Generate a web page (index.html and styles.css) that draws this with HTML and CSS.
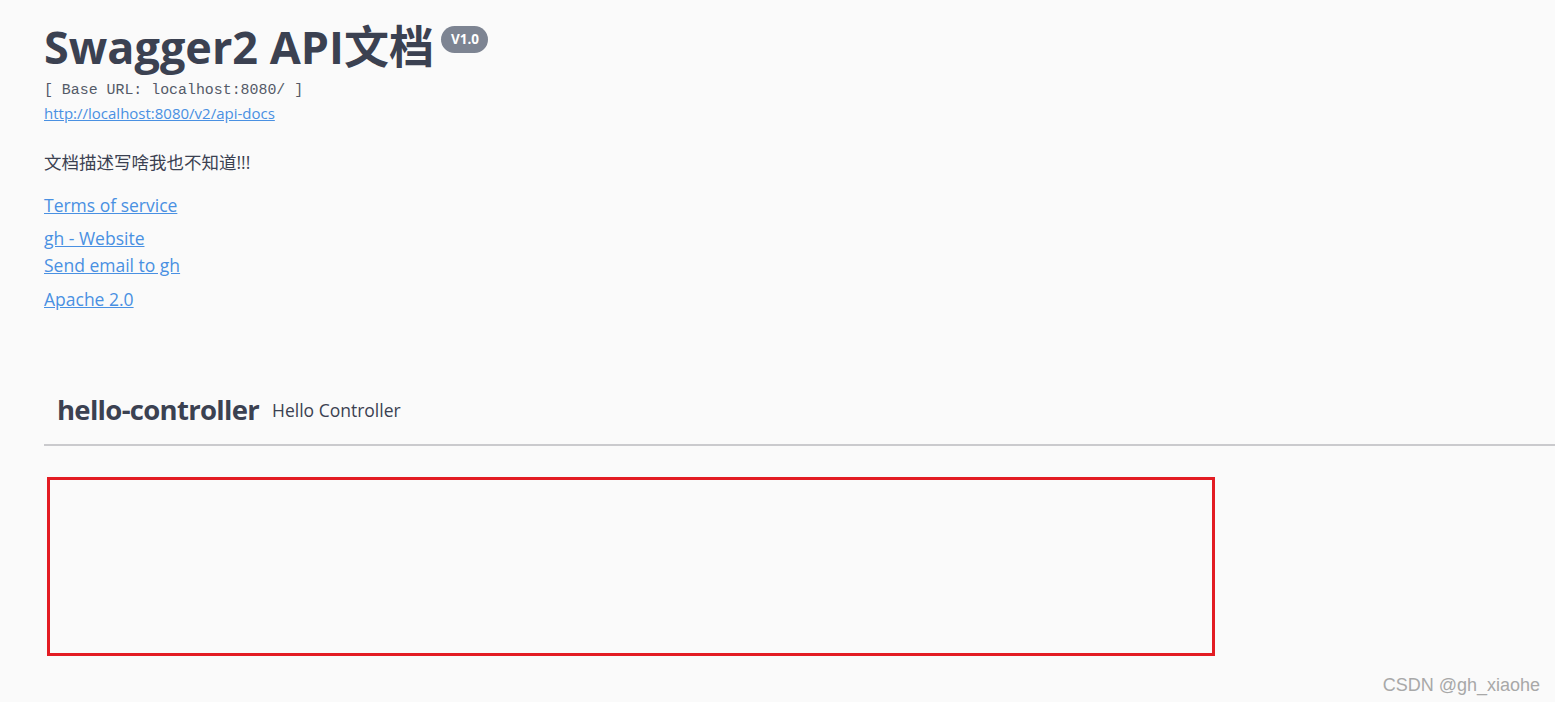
FILE: index.html
```html
<!DOCTYPE html>
<html lang="zh-CN">
<head>
<meta charset="utf-8">
<title>Swagger2 API文档</title>
<link rel="stylesheet" href="styles.css">
</head>
<body>
<div class="page">
  <section class="info">
    <h2 class="title">Swagger2 API文档<span class="version">V1.0</span></h2>
    <pre class="base-url">[ Base URL: localhost:8080/ ]</pre>
    <a class="url" href="#">http://localhost:8080/v2/api-docs</a>
    <p class="description">文档描述写啥我也不知道!!!</p>
    <div class="tos"><a href="#">Terms of service</a></div>
    <div class="contact">
      <a href="#">gh - Website</a>
      <a href="#">Send email to gh</a>
    </div>
    <div class="license"><a href="#">Apache 2.0</a></div>
  </section>
  <section class="tag-section">
    <h3 class="tag"><span class="tag-name">hello-controller</span><small class="tag-desc">Hello Controller</small></h3>
    <div class="highlight-box"></div>
  </section>
</div>
<div class="watermark">CSDN @gh_xiaohe</div>
</body>
</html>
```
FILE: styles.css
```css
html, body {
  margin: 0;
  padding: 0;
  background: #fafafa;
  color: #3b4151;
  font-family: "Open Sans", "Noto Sans CJK SC", sans-serif;
}

.page {
  padding: 20px 0 0 44px;
}

.info {
  display: flex;
  flex-direction: column;
  align-items: flex-start;
}

.title {
  margin: 0;
  font-size: 45px;
  line-height: 54px;
  font-weight: 700;
  color: #3b4151;
  font-family: "Open Sans", "Noto Sans CJK SC", sans-serif;
  white-space: nowrap;
}

.version {
  display: inline-block;
  vertical-align: top;
  margin: 6px 0 0 7px;
  height: 27px;
  line-height: 27px;
  padding: 0 9px 0 10px;
  border-radius: 14px;
  background: #7d8492;
  color: #fff;
  font-size: 13.5px;
  font-weight: 700;
}

.base-url {
  margin: 7px 0 0;
  font-family: "Liberation Mono", monospace;
  font-size: 14.9px;
  line-height: 18px;
  color: #545a68;
  font-weight: 300;
}

.url {
  margin-top: 4px;
  font-size: 15px;
  line-height: 20px;
  color: #4990e2;
}

.description {
  margin: 26px 0 0;
  font-size: 17.5px;
  line-height: 26px;
  color: #3b4151;
}

.info a {
  color: #4990e2;
}

.tos, .contact, .license {
  display: flex;
  flex-direction: column;
  font-size: 17.5px;
  line-height: 27px;
}

.tos { margin-top: 17px; }
.contact { margin-top: 6px; }
.license { margin-top: 7px; }

.tag-section {
  margin-top: 82px;
}

.tag {
  margin: 0;
  display: flex;
  align-items: center;
  gap: 13px;
  padding: 0 0 19px 13px;
  border-bottom: 2px solid #cacacd;
}

.tag-name {
  font-size: 27.5px;
  font-weight: 700;
  letter-spacing: -0.7px;
  line-height: 30px;
}

.tag-desc {
  font-size: 17.5px;
  font-weight: 400;
  line-height: 26px;
}

.highlight-box {
  margin: 31px 0 0 3px;
  width: 1162px;
  height: 173px;
  border: 3px solid #e31c23;
}

.watermark {
  position: absolute;
  right: 15px;
  bottom: 6px;
  font-family: "Liberation Sans", Arial, sans-serif;
  font-size: 18px;
  color: #a8a8a8;
}
```
